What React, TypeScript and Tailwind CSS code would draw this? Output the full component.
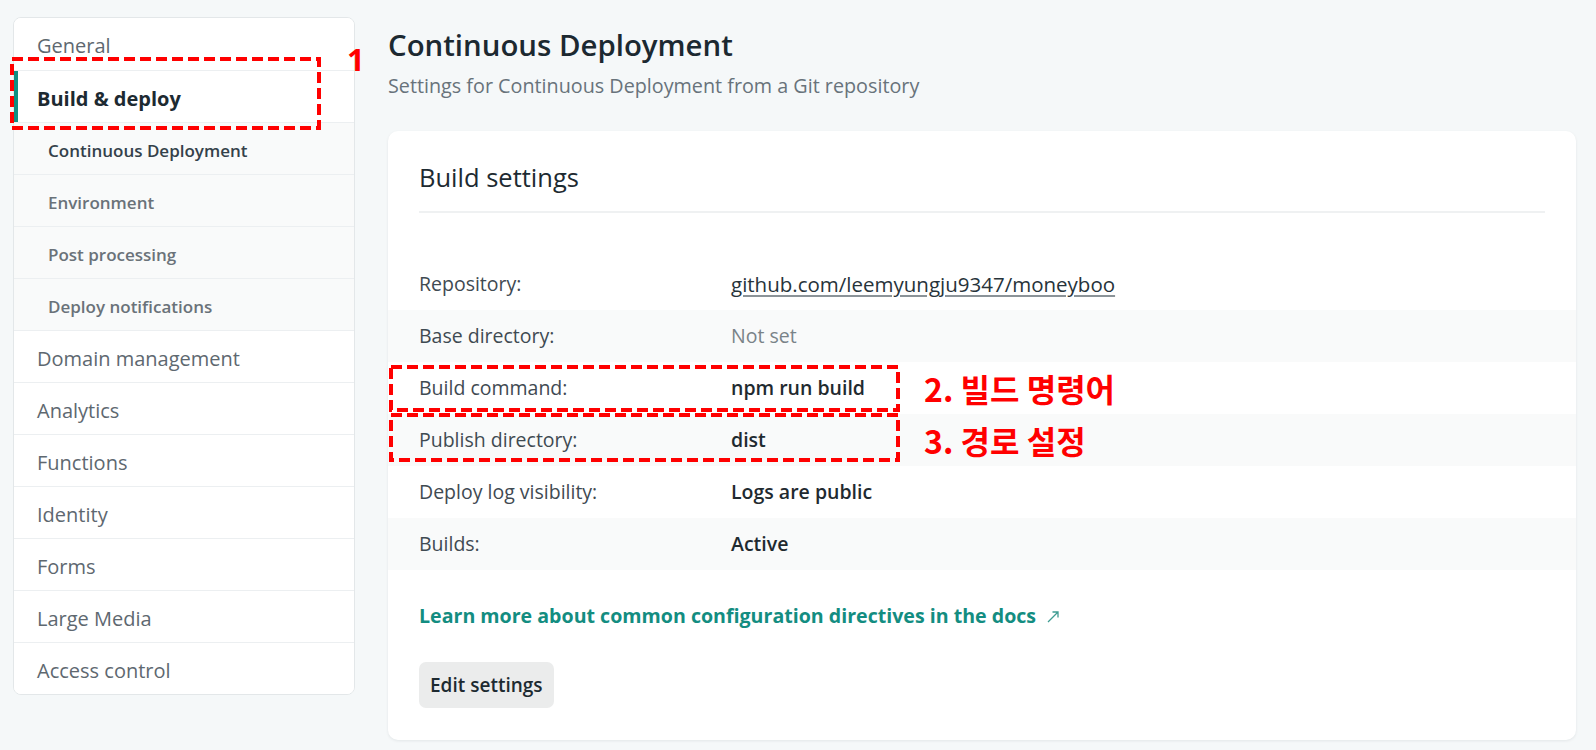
const navItems = [
  { label: "General" },
  { label: "Build & deploy", active: true },
  { label: "Continuous Deployment", sub: true, current: true },
  { label: "Environment", sub: true },
  { label: "Post processing", sub: true },
  { label: "Deploy notifications", sub: true },
  { label: "Domain management" },
  { label: "Analytics" },
  { label: "Functions" },
  { label: "Identity" },
  { label: "Forms" },
  { label: "Large Media" },
  { label: "Access control" },
];

const rows = [
  { label: "Repository:", value: "github.com/leemyungju9347/moneyboo", kind: "link" },
  { label: "Base directory:", value: "Not set", kind: "muted" },
  { label: "Build command:", value: "npm run build" },
  { label: "Publish directory:", value: "dist" },
  { label: "Deploy log visibility:", value: "Logs are public" },
  { label: "Builds:", value: "Active" },
];

function SideNav() {
  return (
    <nav className="w-[342px] shrink-0 self-start bg-white border border-[#e3e7e9] rounded-lg overflow-hidden">
      {navItems.map((item, i) => (
        <div
          key={item.label}
          className={
            "relative h-[52px] pt-[4px] flex items-center " +
            (i > 0 ? "border-t border-[#eceff1] " : "") +
            (item.sub ? "bg-[#f9fafa] pl-[34px]" : "bg-white pl-[23px]")
          }
        >
          {item.active && <div className="absolute left-0 top-0 bottom-0 w-[4px] bg-[#0f8f82]" />}
          {item.sub ? (
            <span
              className={
                "text-[17px] font-semibold " + (item.current ? "text-[#34414a]" : "text-[#6a7279]")
              }
            >
              {item.label}
            </span>
          ) : (
            <span
              className={
                "text-[20px] " + (item.active ? "font-bold text-[#1d2a31]" : "text-[#5e6870]")
              }
            >
              {item.label}
            </span>
          )}
        </div>
      ))}
    </nav>
  );
}

function ExternalArrow() {
  return (
    <svg width="14" height="14" viewBox="0 0 14 14" className="ml-[10px] mt-[2px]" aria-hidden="true">
      <path d="M2 12 L12 2 M6.5 2 H12 V7.5" fill="none" stroke="#3f9c92" strokeWidth="1.3" />
    </svg>
  );
}

// 빨간 점선 박스 (스크린샷 주석)
function DashedBox({ className }: { className: string }) {
  return (
    <svg className={"absolute overflow-visible " + className} aria-hidden="true">
      <rect
        x="2"
        y="2"
        width="calc(100% - 4px)"
        height="calc(100% - 4px)"
        fill="none"
        stroke="#ff0000"
        strokeWidth="4"
        strokeDasharray="11 5"
      />
    </svg>
  );
}

function BuildSettingsCard() {
  return (
    <section className="bg-white rounded-[10px] shadow-[0_1px_3px_rgba(14,30,37,0.08)] pt-[29px] pb-[32px]">
      <div className="mx-[31px] border-b-2 border-[#eff1f2] pb-[17px]">
        <h2 className="text-[25.5px] leading-[34px] text-[#1d2a31]">Build settings</h2>
      </div>

      <dl className="mt-[45px]">
        {rows.map((row, i) => (
          <div
            key={row.label}
            className={"h-[52px] flex items-center px-[31px] " + (i % 2 === 1 ? "bg-[#f9fafa]" : "bg-white")}
          >
            <dt className="w-[312px] shrink-0 text-[19.5px] text-[#3f4a52]">{row.label}</dt>
            <dd
              className={
                "text-[19.5px] " +
                (row.kind === "link"
                  ? "text-[20.5px] text-[#27333a] underline decoration-[#8b9398] underline-offset-[3px]"
                  : row.kind === "muted"
                  ? "text-[#7a8388]"
                  : "font-semibold text-[#1f2a30]")
              }
            >
              {row.value}
            </dd>
          </div>
        ))}
      </dl>

      <div className="px-[31px] mt-[32px] flex items-center">
        <a className="text-[19.6px] leading-[28px] font-bold text-[#138d81]">
          Learn more about common configuration directives in the docs
        </a>
        <ExternalArrow />
      </div>

      <div className="px-[31px] mt-[32px]">
        <button className="h-[46px] px-[11px] rounded-[7px] bg-[#ebecec] text-[19px] font-semibold text-[#1d2a31]">
          Edit settings
        </button>
      </div>
    </section>
  );
}

export default function App() {
  return (
    <div
      className="relative min-h-[750px] bg-[#f5f8f9] pt-[17px] pl-[13px] pr-[20px] pb-[10px] flex gap-[33px]"
      style={{ fontFamily: '"Open Sans", "Noto Sans CJK KR", sans-serif' }}
    >
      <SideNav />

      <main className="flex-1 pt-[8px]">
        <h1 className="text-[29.4px] leading-[40px] font-semibold text-[#1c2931]">Continuous Deployment</h1>
        <p className="mt-[7px] text-[19.75px] leading-[28px] text-[#68737b]">
          Settings for Continuous Deployment from a Git repository
        </p>
        <div className="mt-[31px]">
          <BuildSettingsCard />
        </div>
      </main>

      {/* 빨간 주석 표시 */}
      <DashedBox className="left-[10px] top-[57px] w-[311px] h-[73px]" />
      <span className="absolute left-[347px] top-[38px] text-[31px] leading-[42px] font-bold text-[#ff0000]">1</span>

      <DashedBox className="left-[389px] top-[365px] w-[511px] h-[47px]" />
      <DashedBox className="left-[389px] top-[413px] w-[511px] h-[49px]" />
      <span
        className="absolute left-[924px] top-[366px] text-[32px] leading-[44px] font-bold text-[#ff0000]"
        style={{ fontFamily: '"Noto Sans CJK KR", sans-serif' }}
      >
        2. 빌드 명령어
      </span>
      <span
        className="absolute left-[924px] top-[418px] text-[32px] leading-[44px] font-bold text-[#ff0000]"
        style={{ fontFamily: '"Noto Sans CJK KR", sans-serif' }}
      >
        3. 경로 설정
      </span>
    </div>
  );
}
